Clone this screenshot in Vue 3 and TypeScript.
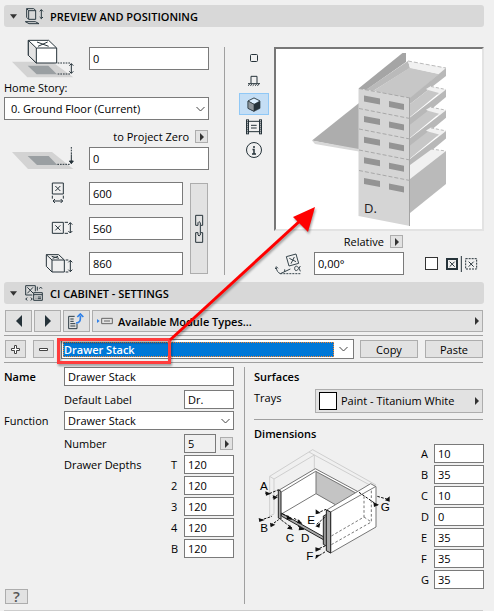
<script setup lang="ts">
import { ref } from 'vue'

interface Field {
  label: string
  value: string
}

const elevation = ref('0')
const projectZero = ref('0')
const width = ref('600')
const depth = ref('560')
const height = ref('860')
const angle = ref('0,00°')
const mirrored = ref(false)
const name = ref('Drawer Stack')
const shortLabel = ref('Dr.')
const count = ref('5')
const view = ref('solid')

const depths = ref<Field[]>([
  { label: 'T', value: '120' },
  { label: '2', value: '120' },
  { label: '3', value: '120' },
  { label: '4', value: '120' },
  { label: 'B', value: '120' },
])

const dimensions = ref<Field[]>([
  { label: 'A', value: '10' },
  { label: 'B', value: '35' },
  { label: 'C', value: '10' },
  { label: 'D', value: '0' },
  { label: 'E', value: '35' },
  { label: 'F', value: '35' },
  { label: 'G', value: '35' },
])

const rows = [0, 1, 2, 3, 4]
const trays = [0, 1, 2]
</script>

<template>
  <main class="dialog">
    <button class="section-head" type="button">
      <svg class="caret" viewBox="0 0 8 5"><path d="M0 0h8L4 5z" /></svg>
      <svg class="head-icon" viewBox="75 21 57 54" fill="none" stroke="#2b3a42" stroke-width="3">
        <path d="M80 26h21l6 5v27H86l-6-6zM80 26l6 6h21M86 32v26M76 65h30l11 6H87zM124 29v27M119 34l5-5 5 5M119 51l5 5 5-5" />
      </svg>
      <span>PREVIEW AND POSITIONING</span>
    </button>

    <section class="preview-section">
      <div class="placement">
        <label class="field-row tall">
          <svg class="level-icon" viewBox="36 115 186 117" fill="none" stroke="#26333a" stroke-width="3">
            <path d="M36 183h120l64 47H82z" fill="#d3d3d3" stroke="none" />
            <path d="M83 195h62l26 26h-61z" fill="#9a9fa2" stroke="none" />
            <path d="M85 119h61l24 23v45h-61l-24-23z" fill="#fff" />
            <path d="M85 119l24 23v45l-24-23z" fill="#e4e4e4" />
            <path d="M109 142h61M111 124l35 13M143 124l-29 13" />
            <path d="M173 187h40M173 220h40" stroke-dasharray="5 3" />
            <path d="M214 189v29M208 195l6-6 6 6M208 212l6 6 6-6" />
          </svg>
          <input v-model="elevation" aria-label="Elevation to home story" />
        </label>
        <label class="story-label" for="story">Home Story:</label>
        <div class="select-box">
          <select id="story"><option>0. Ground Floor (Current)</option></select>
          <svg class="chevron" viewBox="0 0 9 6"><path d="M.5 1l4 4 4-4" /></svg>
        </div>
        <div class="zero-row">
          <span>to Project Zero</span>
          <button class="mini" type="button" aria-label="Reference level"><svg viewBox="0 0 4 8"><path d="M0 0l4 4-4 4z" /></svg></button>
        </div>
        <label class="field-row">
          <svg class="zero-icon" viewBox="36 66 186 69" fill="none" stroke="#26333a" stroke-width="3">
            <path d="M36 81h120l64 51H84z" fill="#d3d3d3" stroke="none" />
            <path d="M83 93h63l26 27h-61z" fill="#9a9fa2" stroke="none" />
            <path d="M172 118h40" stroke-dasharray="5 3" />
            <path d="M214 66v22" stroke-dasharray="5 3" />
            <path d="M214 88v27M208 108l6 8 6-8z" fill="#26333a" />
          </svg>
          <input v-model="projectZero" aria-label="Elevation to project zero" />
        </label>
        <div class="size-block">
          <div class="sizes">
            <label class="size-row">
              <svg class="size-icon" viewBox="135 175 87 66">
                <path d="M157 178h33v33h-33zM166 187l15 15M181 187l-15 15M157 216v9M190 216v9M159 232h29M165 226l-6 6 6 6M182 226l6 6-6 6" />
              </svg>
              <input v-model="width" aria-label="Width" />
            </label>
            <label class="size-row">
              <svg class="size-icon" viewBox="135 279 87 66">
                <path d="M157 295h33v33h-33zM166 304l15 15M181 304l-15 15M194 295h10M194 328h10M211 296v31M205 302l6-6 6 6M205 321l6 6 6-6" />
              </svg>
              <input v-model="depth" aria-label="Depth" />
            </label>
            <label class="size-row">
              <svg class="size-icon" viewBox="135 386 87 66">
                <path d="M139 394h37l17 16v36h-37l-17-17zM139 394l17 16h37M156 410v36M155 399l22 6M174 399l-16 6M197 410h8M197 446h8M211 411v34M205 417l6-6 6 6M205 439l6 6 6-6" />
              </svg>
              <input v-model="height" aria-label="Height" />
            </label>
          </div>
          <button class="link-button" type="button" aria-label="Keep proportions">
            <svg viewBox="582 264 30 90" fill="none" stroke="#26333a" stroke-width="3">
              <path d="M594 298h-7v-30h21v30h-5M594 320h-7v29h21v-29h-5M594 298v-8l3-3 4 3v37l-4 3-3-3v-7" />
            </svg>
          </button>
        </div>
      </div>

      <div class="view-modes">
        <button type="button" aria-label="2D symbol" @click="view = 'plan'">
          <svg viewBox="-4 -4 8 8"><rect x="-3.5" y="-3.5" width="7" height="7" rx="1" fill="none" stroke="#26333a" /></svg>
        </button>
        <button type="button" aria-label="Elevation" @click="view = 'front'">
          <svg class="front" viewBox="24 123 36 36" fill="none" stroke="#26333a" stroke-width="3">
            <path d="M33 148v-21h18v21M24 149h36" /><path d="M24 155l5-4M31 155l5-4M38 155l5-4M45 155l5-4M52 155l5-4" />
          </svg>
        </button>
        <button type="button" :class="{ active: view === 'solid' }" aria-label="3D view" @click="view = 'solid'">
          <svg class="cube" viewBox="21 184 42 45" stroke="#26333a" stroke-width="2">
            <path d="M42 187l18 9v22l-18 9-18-9v-22z" fill="#26333a" /><path d="M42 187l18 9-18 10-18-10z" fill="#ddf0ff" /><path d="M24 196l18 10v21l-18-9z" fill="#8f979c" />
          </svg>
        </button>
        <button type="button" aria-label="Preview picture" @click="view = 'picture'">
          <svg class="film" viewBox="18 254 48 48" fill="none" stroke="#26333a" stroke-width="3">
            <path d="M26 261h32M26 292h32M33 273h17M33 281h17" /><path d="M19.500 255v45M25.500 255v45M58.500 255v45M64.500 255v45" /><path d="M22.500 255v45M61.500 255v45" stroke-dasharray="3 3" />
          </svg>
        </button>
        <button type="button" aria-label="Info" @click="view = 'info'">
          <svg class="info" viewBox="0 0 16 16"><circle cx="8" cy="8" r="7.500" fill="none" stroke="#26333a" /><path d="M8 4v2M6.500 7.500H8V12M6 12h4" fill="none" stroke="#26333a" stroke-width="1.500" /></svg>
        </button>
      </div>

      <div class="preview-side">
        <div class="preview-frame">
          <svg class="preview" viewBox="276 49 206 180">
            <path d="M312 140.500L359 103v47z" fill="#adadad" /><path d="M312 140.500l47 8.500v2.500L315 144z" fill="#d8d8d8" />
            <path d="M358.500 88.500L402.500 53h3.500v9L366 90z" fill="#a5a5a5" />
            <path d="M365.500 90L408 61l2 7-37 23z" fill="#bababa" />
            <path d="M373 91l37-23.500 29 6.500-29 25z" fill="#c7c7c7" />
            <path d="M408 61l38 7-7 6-29-6z" fill="#f1f1f1" /><path d="M408 61l38 7" stroke="#bbb" stroke-dasharray="4 2" />
            <path d="M446 68v8l-36 28v-6z" fill="#b8b8b8" />
            <g v-for="i in trays" :key="i" :transform="`translate(0 ${i * 20.7})`">
              <path d="M426 89l5-3 15 3.500-8 6z" fill="#f1f1f1" /><path d="M431 86.500l15 3" stroke="#bbb" stroke-dasharray="3 2" />
              <path d="M410 104l18-14 11 3-29 24z" fill="#c7c7c7" /><path d="M410 117.500l36-28v7.500l-36 30z" fill="#b8b8b8" />
            </g>
            <path d="M410 165l22-16 14 2-36 28z" fill="#f1f1f1" /><path d="M431 149l15 2" stroke="#bbb" stroke-dasharray="3 2" />
            <path d="M410 179l36-28v33l-36 29z" fill="#bababa" />
            <path d="M358.500 88.500L410 98v128l-51.500-10z" fill="#d5d5d5" /><path d="M409.500 98v128" stroke="#a4a4a4" />
            <path d="M359 88.500l51 9.500M359 108.500l51 10M359 129l51 10M359 150l51 10M359 170.500l51 10" stroke="#a8a8a8" stroke-dasharray="4 2" />
            <g v-for="i in rows" :key="i" :transform="`translate(0 ${i * 20.6})`" fill="#949494">
              <path d="M364 95.500l16 3v6l-16-3zM389 101l15 3v6l-15-3z" />
            </g>
            <text x="364" y="213" font-size="13" fill="#222">D.</text>
          </svg>
        </div>
        <div class="relative-row">
          <span>Relative</span>
          <button class="mini" type="button" aria-label="Angle reference"><svg viewBox="0 0 4 8"><path d="M0 0l4 4-4 4z" /></svg></button>
        </div>
        <div class="angle-row">
          <svg class="angle-icon" viewBox="105 368 84 69" fill="none" stroke="#37454c" stroke-width="3">
            <path d="M142 382l29-8 8 28-29 8zM151 387l20 10M166 383l-10 20M112 416c1 8 5 14 12 17M109 419l3-7 5 5M124 433l30-14M137 420v8" /><path d="M124 433h62" stroke-dasharray="6 3" /><path d="M184 410c-7 14-16 19-17 8s11-11 17 8" />
          </svg>
          <input v-model="angle" class="angle" aria-label="Rotation angle" />
          <label class="mirror">
            <input v-model="mirrored" type="checkbox" aria-label="Mirror" />
            <svg viewBox="615 378 99 48" fill="none" stroke="#26333a" stroke-width="3">
              <path d="M621 387h30v30h-30z" stroke-width="6" /><path d="M629 395l15 15M644 395l-15 15M664 378v48M686 395l15 15M701 395l-15 15" /><path d="M677 386h33v31h-33z" stroke-dasharray="6 3" />
            </svg>
          </label>
        </div>
      </div>
    </section>

    <button class="section-head" type="button">
      <svg class="caret" viewBox="0 0 8 5"><path d="M0 0h8L4 5z" /></svg>
      <svg class="head-icon" viewBox="75 12 57 54" fill="none" stroke="#2b3a42" stroke-width="3">
        <path d="M106 34v-17H77v28h20M82 22l18 18M99 22L82 40M101 38h26v23h-26zM101 44h26M107 51h2M113 51h10M107 56h2M113 56h10M112 20v12M82 53l-5 4 5 4M92 53l5 4-5 4M118 26l4-5 4 5" />
      </svg>
      <span>CI CABINET - SETTINGS</span>
    </button>

    <section class="settings">
      <nav class="toolbar">
        <button type="button" aria-label="Previous"><svg class="step" viewBox="0 0 6 12"><path d="M6 0v12L0 6z" /></svg></button>
        <button type="button" aria-label="Next"><svg class="step" viewBox="0 0 6 12"><path d="M0 0v12l6-6z" /></svg></button>
        <button type="button" aria-label="Transfer">
          <svg class="transfer" viewBox="204 99 51 51" fill="none" stroke="#2b3a42" stroke-width="3">
            <path d="M224 109h-18v37h25v-15M211 117h10M211 124h10M211 131h15M211 138h15" /><path d="M228 129c12 0 14-7 13-22M232 111l9-9 9 9" stroke="#2f80e8" stroke-width="5" />
          </svg>
        </button>
        <button class="modules" type="button">
          <svg class="module-icon" viewBox="291 111 48 24"><path d="M291 117l8 6-8 6z" fill="#2f80e8" /><path d="M305 115h32v16h-32zM312 123h18" fill="none" stroke="#666" stroke-width="3" /></svg>
          <strong>Available Module Types...</strong>
          <svg class="more" viewBox="0 0 4 8"><path d="M0 0l4 4-4 4z" /></svg>
        </button>
      </nav>

      <div class="module-bar">
        <button class="square" type="button" aria-label="Add"><svg viewBox="0 0 9 9"><path d="M3.500.5h2v3h3v2h-3v3h-2v-3h-3v-2h3z" /></svg></button>
        <button class="square" type="button" aria-label="Remove"><svg viewBox="0 0 9 9"><path d="M.5 3.500h8v2h-8z" /></svg></button>
        <div class="select-box module-select">
          <select aria-label="Module"><option>Drawer Stack</option></select>
          <svg class="chevron" viewBox="0 0 9 6"><path d="M.5 1l4 4 4-4" /></svg>
        </div>
        <button class="text-button" type="button">Copy</button>
        <button class="text-button" type="button">Paste</button>
      </div>

      <div class="columns">
        <div class="left">
          <div class="line">
            <label class="key" for="name"><strong>Name</strong></label>
            <input id="name" v-model="name" class="wide" />
          </div>
          <div class="line label-line">
            <label class="sub" for="short">Default Label</label>
            <input id="short" v-model="shortLabel" class="small" />
          </div>
          <div class="line">
            <label class="key" for="function">Function</label>
            <div class="select-box wide">
              <select id="function"><option>Drawer Stack</option></select>
              <svg class="chevron" viewBox="0 0 9 6"><path d="M.5 1l4 4 4-4" /></svg>
            </div>
          </div>
          <div class="line number-line">
            <label class="sub" for="number">Number</label>
            <span class="number">
              <input id="number" v-model="count" readonly />
              <button class="mini" type="button" aria-label="Choose number"><svg viewBox="0 0 4 8"><path d="M0 0l4 4-4 4z" /></svg></button>
            </span>
          </div>
          <div class="depths">
            <span>Drawer Depths</span>
            <div class="stack">
              <label v-for="d in depths" :key="d.label"><span>{{ d.label }}</span><input v-model="d.value" /></label>
            </div>
          </div>
          <button class="help" type="button">?</button>
        </div>

        <div class="right">
          <h2>Surfaces</h2>
          <div class="trays">
            <span>Trays</span>
            <button class="surface" type="button">
              <span class="swatch"></span>
              <span class="paint">Paint - Titanium White</span>
              <svg class="more" viewBox="0 0 4 8"><path d="M0 0l4 4-4 4z" /></svg>
            </button>
          </div>
          <h2 class="ruled">Dimensions</h2>
          <div class="dimensions">
            <svg class="diagram" viewBox="39 21 405 351" fill="none" stroke="#777" stroke-width="3">
              <g stroke="#cfcfcf">
                <path d="M77 228V109L206 29l190 106M77 109l13 8v104M90 117L211 45l170 92M195 36l16 9v44M77 228l13-6" />
              </g>
              <path d="M106 151L214 87l150 80v74L248 306 108 224z" fill="#fff" stroke="none" />
              <path d="M216 94l122 65-64 36-58-34z" fill="#c4c4c4" stroke="none" />
              <path d="M104 151L214 86l130 70M112 156l103-62 122 66M216 94v67l-102 60M216 161l58 33" />
              <path d="M103 149l8 5v84l-8-4z" fill="#aaa" stroke="#222" />
              <path d="M112 219l128 72v9L112 228z" fill="#aaa" stroke="#222" />
              <path d="M238 228l10-5v96l-10-6z" fill="#999" stroke="#222" />
              <path d="M248 210L380 131l16 9v121L260 339l-12-7z" fill="#fff" /><path d="M260 216L396 139M248 210l12 6v123" />
              <path d="M247 210l13 6v123l-13-7z" fill="#aaa" stroke="#222" />
              <path d="M262 288L360 231V169M262 314L382 246V149M360 231l22 15" stroke-dasharray="8 6" />
              <g stroke="#111" stroke-dasharray="8 4">
                <path d="M64 160h14l24-10M86 173l15-8M48 241l36-12M80 256l24-17M115 222l28 13M112 240l32 24M150 235l22 12M162 258l18 10M218 220l28-12M218 253l28-24M215 330l28-12M216 353l28-18M345 157l58 40M400 169l35 10" />
              </g>
              <g fill="#111" stroke="none">
                <path d="M64 154l17 7-15 6zM86 166l16 5-13 9zM44 234l18 6-16 6zM78 248l16 6-14 8zM131 225l14 14-18-1zM138 255l8 14-17-3zM164 238l11 14-16-3zM166 259l15 10-17 2zM215 208l15 11-15 4zM214 259l15-11-3 15zM214 322l18 5-17 8zM214 358l2-13 13-1zM388 187l17 7-15 7zM423 181l14-12v16z" />
              </g>
              <g class="marks" stroke="none">
                <text x="48" y="149">A</text><text x="49" y="276">B</text><text x="125" y="306">C</text><text x="171" y="305">D</text><text x="190" y="251">E</text><text x="187" y="360">F</text><text x="410" y="213">G</text>
              </g>
            </svg>
            <div class="stack dim-stack">
              <label v-for="d in dimensions" :key="d.label"><span>{{ d.label }}</span><input v-model="d.value" /></label>
            </div>
          </div>
        </div>
      </div>
    </section>

    <svg class="callout" width="494" height="611" viewBox="0 0 494 611" aria-hidden="true">
      <rect x="58.500" y="339.500" width="111" height="23" fill="none" stroke="#ff3d3d" stroke-width="3" />
      <path d="M170 340L302 219" stroke="#f00" stroke-width="3" /><path d="M315 207l-22 10 15 15z" fill="#f00" />
    </svg>
  </main>
</template>

<style>
body {
  margin: 0;
  background: #f0f0f0;
}
</style>

<style scoped>
.dialog {
  position: relative;
  box-sizing: border-box;
  padding: 5px 10px 0 4px;
  background: #f0f0f0;
  color: #000;
  font: 11px/15px "Open Sans", "Noto Sans", sans-serif;
}
.dialog * {
  box-sizing: border-box;
}
svg {
  display: block;
  flex: none;
}
button,
input,
select {
  margin: 0;
  font: inherit;
  color: inherit;
  border-radius: 0;
}
input,
select {
  width: 100%;
  min-width: 0;
  height: 23px;
  padding: 0 3px;
  border: 1px solid #7a7a7a;
  background: #fff;
  outline: 0;
}
select {
  grid-area: 1 / 1;
  appearance: none;
  padding: 0 6px;
}
button {
  display: flex;
  align-items: center;
  justify-content: center;
  padding: 0;
  border: 1px solid #adadad;
  background: #e2e2e2;
}
strong,
h2 {
  font-weight: 600;
}
.select-box {
  display: grid;
  align-items: center;
}
.chevron {
  grid-area: 1 / 1;
  justify-self: end;
  width: 9px;
  height: 6px;
  margin-right: 4px;
  fill: none;
  stroke: #444;
  pointer-events: none;
}
.section-head {
  width: 100%;
  height: 22px;
  justify-content: flex-start;
  padding-left: 6px;
  border: 0;
  border-radius: 3px;
  background: #d8d8d8;
  font-weight: 600;
}
.caret {
  width: 7px;
  height: 5px;
  margin-right: 8px;
  fill: #333;
}
.head-icon {
  width: 19px;
  height: 18px;
  margin-right: 6px;
}
.preview-section {
  display: grid;
  grid-template-columns: 220px 45px 1fr;
  padding: 12px 0 7px;
}
.placement {
  display: flex;
  flex-direction: column;
  padding-right: 15px;
}
.field-row {
  display: grid;
  grid-template-columns: 62px 1fr;
  gap: 15px;
  align-items: center;
  margin-left: 8px;
}
.field-row.tall {
  height: 39px;
}
.level-icon {
  width: 62px;
  height: 39px;
}
.zero-icon {
  width: 62px;
  height: 23px;
}
.story-label {
  height: 19px;
  line-height: 19px;
}
.zero-row,
.relative-row {
  display: flex;
  align-items: center;
  justify-content: flex-end;
  gap: 6px;
  height: 21px;
  margin-top: 6px;
  padding-right: 1px;
}
.mini {
  width: 13px;
  height: 13px;
}
.mini svg,
.more {
  width: 4px;
  height: 8px;
  fill: #333;
}
.size-block {
  display: flex;
  gap: 7px;
  margin-top: 12px;
}
.sizes {
  display: flex;
  flex: 1;
  flex-direction: column;
  gap: 12px;
}
.size-row {
  display: grid;
  grid-template-columns: 29px 1fr;
  gap: 15px;
  margin-left: 41px;
}
.size-icon {
  width: 29px;
  height: 22px;
  fill: none;
  stroke: #26333a;
  stroke-width: 3px;
}
.link-button {
  width: 18px;
  margin: 1px 1px 1px 0;
}
.link-button svg {
  width: 10px;
  height: 30px;
}
.view-modes {
  display: flex;
  flex-direction: column;
  gap: 1px;
  margin-top: 8px;
  padding-left: 14px;
  border-left: 1px solid #a0a0a0;
}
.view-modes button {
  height: 22px;
  border-color: transparent;
  background: none;
}
.view-modes button.active {
  border-color: #90c8f6;
  background: #c4def5;
}
.view-modes svg {
  width: 8px;
  height: 8px;
}
.view-modes .front {
  width: 12px;
  height: 12px;
}
.view-modes .cube {
  width: 14px;
  height: 15px;
}
.view-modes .film,
.view-modes .info {
  width: 16px;
  height: 16px;
}
.preview-side {
  padding: 8px 0 0 5px;
}
.preview-frame {
  height: 184px;
  border: 2px solid #696969;
  border-color: #777 #e3e3e3 #e3e3e3 #777;
  background: #fff;
}
.preview {
  width: 100%;
  height: 100%;
}
.relative-row {
  margin: 0;
  padding-right: 81px;
}
.angle-row {
  display: flex;
  align-items: center;
}
.angle-icon {
  width: 28px;
  height: 23px;
}
.angle {
  flex: 1;
  margin-left: 12px;
}
.mirror {
  display: flex;
  align-items: center;
  gap: 7px;
  margin: 0 6px 0 21px;
}
.mirror input {
  width: 13px;
  height: 13px;
  appearance: none;
  border-color: #333;
}
.mirror svg {
  width: 33px;
  height: 16px;
}
.settings {
  padding: 6px 1px 0 0;
}
.toolbar {
  display: flex;
  gap: 2px;
  padding: 0 0 3px 1px;
}
.toolbar button {
  width: 27px;
  height: 22px;
}
.toolbar .modules {
  flex: 1;
  justify-content: flex-start;
  padding: 0 3px 0 4px;
}
.step {
  width: 6px;
  height: 12px;
  fill: #26333a;
}
.transfer {
  width: 17px;
  height: 17px;
}
.module-icon {
  width: 16px;
  height: 8px;
  margin-right: 5px;
}
.more {
  margin-left: auto;
}
.module-bar {
  display: flex;
  align-items: center;
  gap: 7px;
  height: 28px;
  padding-left: 1px;
  border: solid #a0a0a0;
  border-width: 1px 0;
}
.square {
  width: 21px;
  height: 18px;
}
.square svg {
  width: 9px;
  height: 9px;
  fill: #fff;
  stroke: #444;
}
.module-select {
  flex: 1;
  height: 20px;
  margin-right: -1px;
  padding: 1px;
  border: 1px solid #7a7a7a;
  background: #fff;
}
.module-select select {
  width: auto;
  height: 15px;
  margin-right: 18px;
  padding: 0;
  border: 1px dotted #ff8728;
  background: #0078d7;
  color: #fff;
  font-weight: 600;
  line-height: 13px;
}
.text-button {
  width: 58px;
  height: 18px;
}
.columns {
  display: grid;
  grid-template-columns: 240px 1fr;
  padding: 4px 0 6px;
}
.columns input,
.columns .select-box select {
  height: 19px;
}
.left {
  display: flex;
  flex-direction: column;
  padding-right: 10px;
}
.line {
  display: flex;
  align-items: center;
}
.key {
  flex: 0 0 60px;
}
.wide {
  flex: 1;
}
.left select {
  padding: 0 3px;
}
.label-line {
  margin: 4px 0 2px;
}
.sub {
  flex: 1;
  padding-left: 60px;
}
.line .small,
.number {
  flex: 0 0 50px;
}
.number-line {
  margin: 4px 0 2px;
}
.number {
  display: flex;
  align-items: center;
  gap: 4px;
}
.number input {
  width: 32px;
  background: #f0f0f0;
}
.depths {
  display: flex;
  justify-content: space-between;
  padding-left: 60px;
  line-height: 19px;
}
.stack {
  display: grid;
  gap: 2px;
}
.stack label {
  display: grid;
  grid-template-columns: 13px 50px;
  line-height: 19px;
}
.help {
  width: 23px;
  height: 15px;
  margin: auto 0 0 1px;
  color: #555;
  font-size: 15px;
  font-weight: 600;
}
.right {
  min-height: 237px;
  padding-left: 9px;
  border-left: 1px solid #a0a0a0;
}
.right h2 {
  margin: 0;
  font-size: 11px;
  line-height: 20px;
}
.trays {
  display: flex;
  justify-content: space-between;
  margin-top: 2px;
  padding-bottom: 6px;
  border-bottom: 1px solid #a0a0a0;
  line-height: 18px;
}
.surface {
  flex: 0 1 168px;
  height: 24px;
  padding: 0 3px;
}
.swatch {
  width: 18px;
  height: 18px;
  margin-right: 4px;
  border: 1px solid #000;
  background: #fff;
}
.right .ruled {
  margin-top: 4px;
}
.dimensions {
  display: flex;
  align-items: flex-start;
  justify-content: space-between;
  margin: 0 -1px 0 3px;
}
.diagram {
  width: 135px;
  height: 117px;
  margin-top: 3px;
}
.marks {
  fill: #000;
  font-family: "Liberation Sans", sans-serif;
  font-size: 35px;
}
.callout {
  position: absolute;
  top: 0;
  left: 0;
  pointer-events: none;
  filter: drop-shadow(1px 2px 1px rgb(0 0 0 / 35%));
}
.settings::after {
  display: block;
  height: 1px;
  background: #ccc;
  content: "";
}
</style>
